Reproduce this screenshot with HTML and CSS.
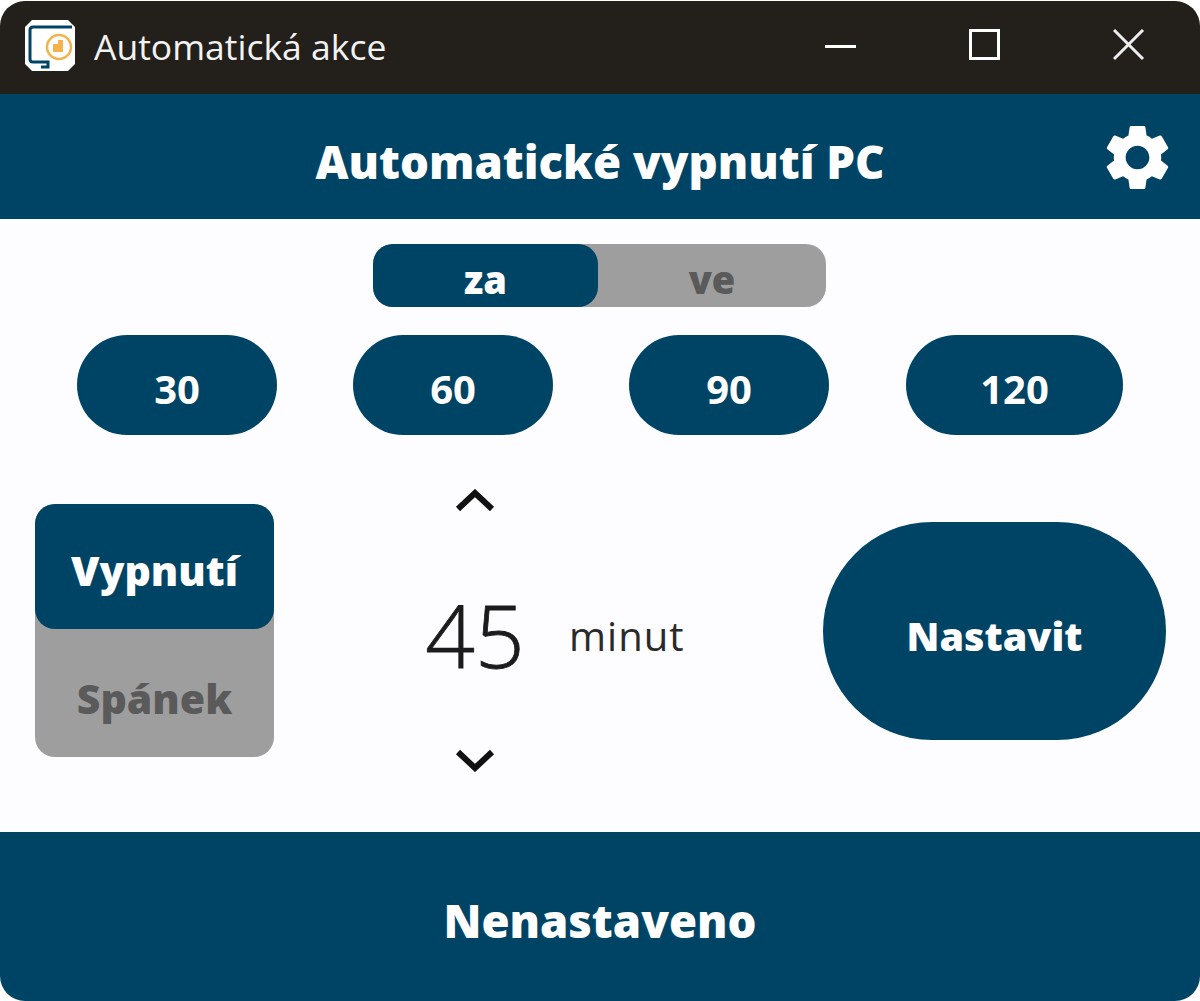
FILE: index.html
```html
<!DOCTYPE html>
<html>
<head>
    <title>Automatická akce</title>
    <link rel="stylesheet" href="styles.css">
</head>
<body>
    <div class="window">
        <!-- Title bar -->
        <div class="titlebar">
            <svg class="app-icon" viewBox="0 0 50 52">
                <path d="M7 0H43L50 7V44L43 51H7L0 44V7Z" fill="#fff"/>
                <path d="M47 7H8Q5 7 5 10V39Q5 42 8 42H23V47H16" fill="none" stroke="#004465" stroke-width="3"/>
                <circle cx="34" cy="27" r="12" fill="none" stroke="#f5b24a" stroke-width="2.5"/>
                <path d="M28 24H33V20H38V32H28Z" fill="#f5b24a"/>
            </svg>
            <span class="app-title">Automatická akce</span>
            <div class="win-controls">
                <svg class="win-btn" viewBox="0 0 32 32"><rect x="0" y="16" width="31" height="3" fill="#fff"/></svg>
                <svg class="win-btn" viewBox="0 0 32 32"><rect x="1.5" y="1.5" width="28" height="28" fill="none" stroke="#fff" stroke-width="3"/></svg>
                <svg class="win-btn" viewBox="0 0 32 32"><path d="M1 1L30 30M30 1L1 30" stroke="#eee" stroke-width="3"/></svg>
            </div>
        </div>

        <!-- Header -->
        <div class="header">
            <h1>Automatické vypnutí PC</h1>
            <svg class="gear" viewBox="0 0 24 24"><path fill="#fff" d="M19.14 12.94c.04-.3.06-.61.06-.94 0-.32-.02-.64-.07-.94l2.03-1.58c.18-.14.23-.41.12-.61l-1.92-3.32c-.12-.22-.37-.29-.59-.22l-2.39.96c-.5-.38-1.03-.7-1.62-.94l-.36-2.54c-.04-.24-.24-.41-.48-.41h-3.84c-.24 0-.43.17-.47.41l-.36 2.54c-.59.24-1.13.57-1.62.94l-2.39-.96c-.22-.08-.47 0-.59.22L2.74 8.87c-.12.21-.08.47.12.61l2.03 1.58c-.05.3-.09.63-.09.94s.02.64.07.94l-2.03 1.58c-.18.14-.23.41-.12.61l1.92 3.32c.12.22.37.29.59.22l2.39-.96c.5.38 1.03.7 1.62.94l.36 2.54c.05.24.24.41.48.41h3.84c.24 0 .44-.17.47-.41l.36-2.54c.59-.24 1.13-.56 1.62-.94l2.39.96c.22.08.47 0 .59-.22l1.92-3.32c.12-.22.07-.47-.12-.61l-2.01-1.58zM12 15.6c-1.98 0-3.6-1.62-3.6-3.6s1.62-3.6 3.6-3.6 3.6 1.62 3.6 3.6-1.62 3.6-3.6 3.6z"/></svg>
        </div>

        <div class="content">
            <div class="mode-toggle">
                <div class="toggle-item active">za</div>
                <div class="toggle-item">ve</div>
            </div>

            <div class="presets">
                <div class="preset">30</div>
                <div class="preset">60</div>
                <div class="preset">90</div>
                <div class="preset wide">120</div>
            </div>

            <div class="main-row">
                <div class="action-switch">
                    <div class="action-item active">Vypnutí</div>
                    <div class="action-item">Spánek</div>
                </div>

                <div class="stepper">
                    <div class="stepper-col">
                        <svg class="chevron" viewBox="0 0 40 24"><path d="M3 20L20 4L37 20" fill="none" stroke="#111" stroke-width="6"/></svg>
                        <div class="minutes">45</div>
                        <svg class="chevron" viewBox="0 0 40 24"><path d="M3 4L20 20L37 4" fill="none" stroke="#111" stroke-width="6"/></svg>
                    </div>
                    <div class="unit">minut</div>
                </div>

                <div class="set-btn">Nastavit</div>
            </div>
        </div>

        <div class="footer">Nenastaveno</div>
    </div>
</body>
</html>
```

FILE: styles.css
```css
* { box-sizing: border-box; }
html, body {
    margin: 0;
    background: #fff;
}
body {
    font-family: "Open Sans", "Noto Sans", sans-serif;
    padding-top: 1px;
}
.window {
    height: 1000px;
    display: flex;
    flex-direction: column;
    border-radius: 25px;
    overflow: hidden;
    background: #fdfcff;
}

/* title bar */
.titlebar {
    height: 93px;
    flex: none;
    display: flex;
    align-items: center;
    background: #231f1a;
    padding-left: 25px;
}
.app-icon { width: 50px; height: 52px; flex: none; margin-top: -3px; }
.app-title {
    margin-left: 19px;
    font-size: 35.5px;
    color: #f2f2f2;
    margin-top: -4px;
}
.win-controls {
    margin-left: auto;
    display: flex;
    gap: 112px;
    padding-right: 55px;
}
.win-btn { width: 32px; height: 32px; margin-top: -6px; }

/* header */
.header {
    height: 125px;
    flex: none;
    background: #004465;
    display: flex;
    align-items: center;
    justify-content: center;
    position: relative;
    padding-top: 8px;
}
.header h1 {
    margin: 0;
    font-size: 45.5px;
    font-weight: 800;
    color: #fff;
}
.gear {
    position: absolute;
    right: 23px;
    top: 24px;
    width: 79px;
    height: 79px;
}

/* content */
.content {
    flex: 1;
    display: flex;
    flex-direction: column;
}
.mode-toggle {
    width: 453px;
    height: 63px;
    margin: 25px 0 0 373px;
    display: flex;
    background: #9e9e9e;
    border-radius: 20px;
}
.toggle-item {
    flex: 1;
    display: flex;
    align-items: center;
    justify-content: center;
    font-size: 38px;
    font-weight: 800;
    color: #5a5a5a;
    border-radius: 20px;
    padding-top: 6px;
}
.toggle-item.active { flex: none; width: 225px; background: #004465; color: #fff; }

.presets {
    display: flex;
    gap: 76px;
    margin: 28px 0 0 77px;
}
.preset {
    width: 200px;
    height: 100px;
    border-radius: 50px;
    background: #004465;
    color: #fff;
    font-size: 40px;
    font-weight: 700;
    display: flex;
    align-items: center;
    justify-content: center;
    padding-top: 6px;
}
.preset.wide { width: 217px; margin-left: 1px; }

.main-row {
    display: flex;
    align-items: center;
    margin-top: 54px;
    padding: 0 34px 0 35px;
}
.action-switch {
    width: 239px;
    height: 253px;
    flex: none;
    background: #9e9e9e;
    border-radius: 20px;
    display: flex;
    flex-direction: column;
}
.action-item {
    flex: 1;
    display: flex;
    align-items: center;
    justify-content: center;
    font-size: 41px;
    font-weight: 800;
    color: #5a5a5a;
    border-radius: 20px;
    padding-top: 10px;
}
.action-item.active { flex: none; height: 125px; background: #004465; color: #fff; padding-top: 6px; }

.stepper {
    display: flex;
    align-items: center;
    margin-left: 140px;
}
.stepper-col {
    width: 122px;
    display: flex;
    flex-direction: column;
    align-items: center;
    gap: 62px;
}
.chevron { width: 40px; height: 24px; }
.minutes {
    font-size: 87px;
    font-weight: 300;
    -webkit-text-stroke: 0.8px #1c1c1c;
    height: 111px;
    line-height: 103px;
    padding-top: 8px;
    color: #1c1c1c;
}
.unit {
    font-size: 40px;
    margin-left: 33px;
    color: #2a2a2a;
    letter-spacing: 1px;
    padding-top: 10px;
}
.set-btn {
    margin-left: auto;
    width: 343px;
    height: 218px;
    border-radius: 109px;
    background: #004465;
    color: #fff;
    font-size: 39.5px;
    font-weight: 800;
    display: flex;
    align-items: center;
    justify-content: center;
    padding-top: 10px;
}

.footer {
    height: 169px;
    flex: none;
    background: #004465;
    color: #fff;
    font-size: 45.5px;
    font-weight: 800;
    display: flex;
    align-items: center;
    justify-content: center;
    padding-top: 6px;
}
```
